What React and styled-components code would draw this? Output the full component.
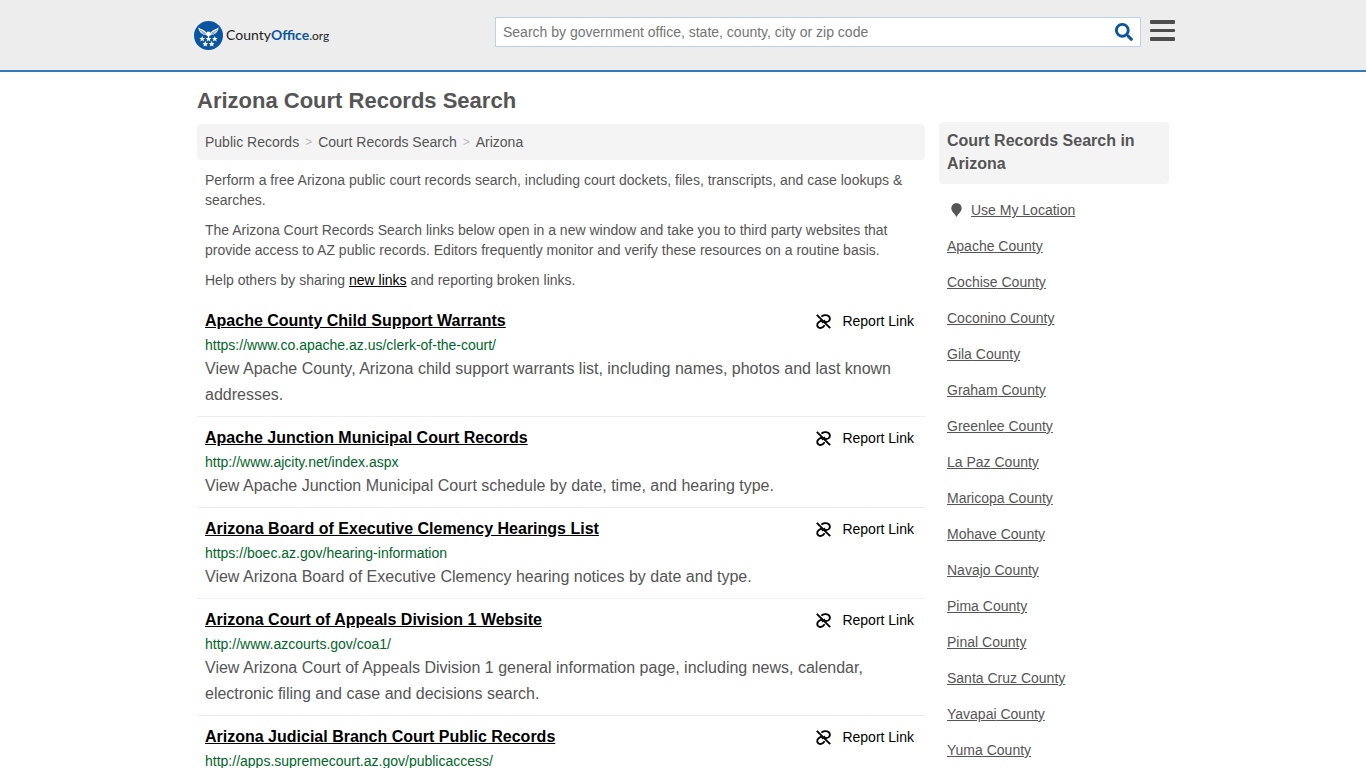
import React, { useState } from 'react';
import styled, { createGlobalStyle } from 'styled-components';
import { FaSearch } from 'react-icons/fa';

const GlobalStyle = createGlobalStyle`
    * {
        box-sizing:border-box;
    }
    body {
        margin:0;
        background-color:#fff;
        color:#555;
        font-family:"Liberation Sans", Arial, sans-serif;
        font-size:14px;
        line-height:20px;
    }
    a {
        color:inherit;
    }
`;

const Header = styled.header`
    background-color:#ededed;
    border-bottom:2px solid #337ab7;
`;

const HeaderInner = styled.div`
    display:flex;
    justify-content:space-between;
    align-items:flex-start;
    max-width:984px;
    margin:0 auto;
    padding:16px 0;
`;

const Logo = styled.a`
    display:flex;
    align-items:center;
    gap:3px;
    height:38px;
    padding-left:3px;
    color:#222;
    font-family:Lato, "Liberation Sans", sans-serif;
    font-size:14px;
    text-decoration:none;
    b {
        color:#0b55a0;
    }
    small {
        font-size:12px;
    }
`;

const HeaderTools = styled.div`
    display:flex;
    align-items:flex-start;
    gap:9px;
    width:680px;
`;

const SearchForm = styled.form`
    display:flex;
    flex:1;
    height:30px;
    margin-top:1px;
    background-color:#fff;
    border:1px solid #bcd3e6;
    input {
        flex:1;
        min-width:0;
        padding:0 7px;
        border:0;
        outline:none;
        background-color:transparent;
        font-family:inherit;
        font-size:14px;
    }
    input::placeholder {
        color:#757575;
    }
    button {
        display:flex;
        align-items:center;
        padding:0 7px;
        border:0;
        background-color:transparent;
        color:#0b55a0;
        font-size:18px;
    }
`;

const MenuButton = styled.button`
    display:flex;
    flex-direction:column;
    gap:5px;
    width:25px;
    padding:4px 0 0;
    border:0;
    background-color:transparent;
    span {
        height:4px;
        border-radius:1px;
        background-color:#4d4d4d;
    }
    span:nth-child(2) {
        height:3px;
    }
`;

const Page = styled.div`
    display:flex;
    align-items:flex-start;
    gap:14px;
    max-width:972px;
    margin:0 auto;
`;

const Main = styled.main`
    flex:1;
    min-width:0;
`;

const PageTitle = styled.h1`
    margin:0;
    padding:15px 0 9px;
    font-size:22px;
    line-height:28px;
`;

const Breadcrumb = styled.nav`
    display:flex;
    gap:6px;
    padding:8px;
    margin-bottom:10px;
    border-radius:4px;
    background-color:#f4f4f4;
    a {
        text-decoration:none;
    }
    span {
        color:#bbb;
        font-size:12px;
    }
`;

const Intro = styled.p`
    margin:0 0 10px;
    padding:0 8px;
    a {
        color:#000;
    }
`;

const Results = styled.ul`
    margin:0;
    padding:0;
    list-style:none;
`;

const Result = styled.li`
    padding:8px;
    border-bottom:1px solid #eee;
`;

const ResultHead = styled.div`
    display:flex;
    justify-content:space-between;
    align-items:center;
    height:26px;
    padding-right:3px;
    color:#000;
    h2 {
        margin:0;
        font-size:16px;
        line-height:26px;
    }
`;

const ReportLink = styled.a`
    display:flex;
    align-items:center;
    gap:11px;
    text-decoration:none;
`;

const ResultUrl = styled.div`
    color:#006629;
    line-height:22px;
`;

const ResultText = styled.p`
    margin:0;
    font-size:16px;
    line-height:26px;
`;

const Sidebar = styled.aside`
    width:230px;
    padding-top:50px;
    h2 {
        margin:0 0 8px;
        padding:7px 8px 9px;
        border-radius:4px;
        background-color:#f4f4f4;
        font-size:16px;
        line-height:23px;
    }
`;

const CountyList = styled.ul`
    margin:0;
    padding:0 8px;
    list-style:none;
    li {
        display:flex;
        align-items:center;
        height:36px;
    }
    svg {
        margin:0 9px 0 4px;
    }
`;

const results = [
    {
        title: 'Apache County Child Support Warrants',
        url: 'https://www.co.apache.az.us/clerk-of-the-court/',
        text: 'View Apache County, Arizona child support warrants list, including names, photos and last known addresses.',
    },
    {
        title: 'Apache Junction Municipal Court Records',
        url: 'http://www.ajcity.net/index.aspx',
        text: 'View Apache Junction Municipal Court schedule by date, time, and hearing type.',
    },
    {
        title: 'Arizona Board of Executive Clemency Hearings List',
        url: 'https://boec.az.gov/hearing-information',
        text: 'View Arizona Board of Executive Clemency hearing notices by date and type.',
    },
    {
        title: 'Arizona Court of Appeals Division 1 Website',
        url: 'http://www.azcourts.gov/coa1/',
        text: 'View Arizona Court of Appeals Division 1 general information page, including news, calendar, electronic filing and case and decisions search.',
    },
    {
        title: 'Arizona Judicial Branch Court Public Records',
        url: 'http://apps.supremecourt.az.gov/publicaccess/',
    },
];

const counties = ['Apache', 'Cochise', 'Coconino', 'Gila', 'Graham', 'Greenlee', 'La Paz', 'Maricopa', 'Mohave', 'Navajo', 'Pima', 'Pinal', 'Santa Cruz', 'Yavapai', 'Yuma'];

const STAR = 'M0 -3L.9 -1L3 -.9L1.4 .5L1.9 2.6L0 1.5L-1.9 2.6L-1.4 .5L-3 -.9L-.9 -1Z';
const stars = [[8.5, 18.5], [15, 18.5], [21.5, 18.5], [11.7, 23.8], [18.3, 23.8]];

const LogoMark = () => (
    <svg width="29" height="29" viewBox="0 0 30 30" aria-hidden="true">
        <circle cx="15" cy="15" r="15" fill="#0b55a0" />
        <path fill="#fff" d="M4.500 6.500C7 9 10 8.500 13 12.200L14 10.800L16 11L17 12.200C20 8.500 23 9 25.500 6.500C25 11.500 21.500 14.500 17.500 14.500L15 16.500L12.500 14.500C8.500 14.500 5 11.500 4.500 6.500Z" />
        <path stroke="#0b55a0" strokeWidth=".6" fill="none" d="M6 9.500L12 12.800M8 12L12 13.800M24 9.500L18 12.800M22 12L18 13.800" />
        {stars.map(([x, y]) => <path key={x} fill="#fff" d={STAR} transform={`translate(${x} ${y})`} />)}
    </svg>
);

const BrokenLinkIcon = () => (
    <svg width="15" height="15" viewBox="0 0 15 15" fill="none" stroke="#000" strokeWidth="1.9" aria-hidden="true">
        <path d="M.8 .8L14.200 14.200" />
        <path d="M5.400 2.600C7 1 10.600 .6 12.500 2C14.600 3.700 14.200 6.400 12.200 7.500C11 8.100 9.800 7.900 8.300 8.300" />
        <path d="M2.600 5.400" />
        <path d="M6.700 6.700C5 6.600 3.600 7.200 2.500 8.300C.8 10 .9 12.200 2.300 13.200C4.300 14.600 6.800 13.800 8.700 11.200" />
        <path d="M6 9L9 6" strokeWidth="1.2" />
    </svg>
);

const PinIcon = () => (
    <svg width="11" height="14" viewBox="0 0 11 14" aria-hidden="true">
        <path fill="#555" d="M5.500 0A5.200 5.200 0 0 0 .3 5.200C.3 8.500 4 11 5.500 14C7 11 10.700 8.500 10.700 5.200A5.200 5.200 0 0 0 5.500 0Z" />
    </svg>
);

const App = () => {
    const [query, setQuery] = useState('');

    return (
        <>
            <GlobalStyle />
            <Header>
                <HeaderInner>
                    <Logo href="/">
                        <LogoMark />
                        <span>County<b>Office</b><small>.org</small></span>
                    </Logo>
                    <HeaderTools>
                        <SearchForm onSubmit={(e) => e.preventDefault()}>
                            <input
                                type="text"
                                aria-label="Search"
                                placeholder="Search by government office, state, county, city or zip code"
                                value={query}
                                onChange={(e) => setQuery(e.target.value)}
                            />
                            <button type="submit" aria-label="Submit search"><FaSearch /></button>
                        </SearchForm>
                        <MenuButton type="button" aria-label="Menu"><span /><span /><span /></MenuButton>
                    </HeaderTools>
                </HeaderInner>
            </Header>
            <Page>
                <Main>
                    <PageTitle>Arizona Court Records Search</PageTitle>
                    <Breadcrumb>
                        <a href="/public-records">Public Records</a>
                        <span>&gt;</span>
                        <a href="/court-records">Court Records Search</a>
                        <span>&gt;</span>
                        <a href="/az-court-records">Arizona</a>
                    </Breadcrumb>
                    <Intro>Perform a free Arizona public court records search, including court dockets, files, transcripts, and case lookups &amp; searches.</Intro>
                    <Intro>The Arizona Court Records Search links below open in a new window and take you to third party websites that provide access to AZ public records. Editors frequently monitor and verify these resources on a routine basis.</Intro>
                    <Intro>Help others by sharing <a href="#new">new links</a> and reporting broken links.</Intro>
                    <Results>
                        {results.map((r) => (
                            <Result key={r.url}>
                                <ResultHead>
                                    <h2><a href={r.url}>{r.title}</a></h2>
                                    <ReportLink href="#report"><BrokenLinkIcon />Report Link</ReportLink>
                                </ResultHead>
                                <ResultUrl>{r.url}</ResultUrl>
                                {r.text && <ResultText>{r.text}</ResultText>}
                            </Result>
                        ))}
                    </Results>
                </Main>
                <Sidebar>
                    <h2>Court Records Search in Arizona</h2>
                    <CountyList>
                        <li><PinIcon /><a href="#location">Use My Location</a></li>
                        {counties.map((name) => (
                            <li key={name}><a href={`#${name}`}>{name} County</a></li>
                        ))}
                    </CountyList>
                </Sidebar>
            </Page>
        </>
    );
};

export default App;
